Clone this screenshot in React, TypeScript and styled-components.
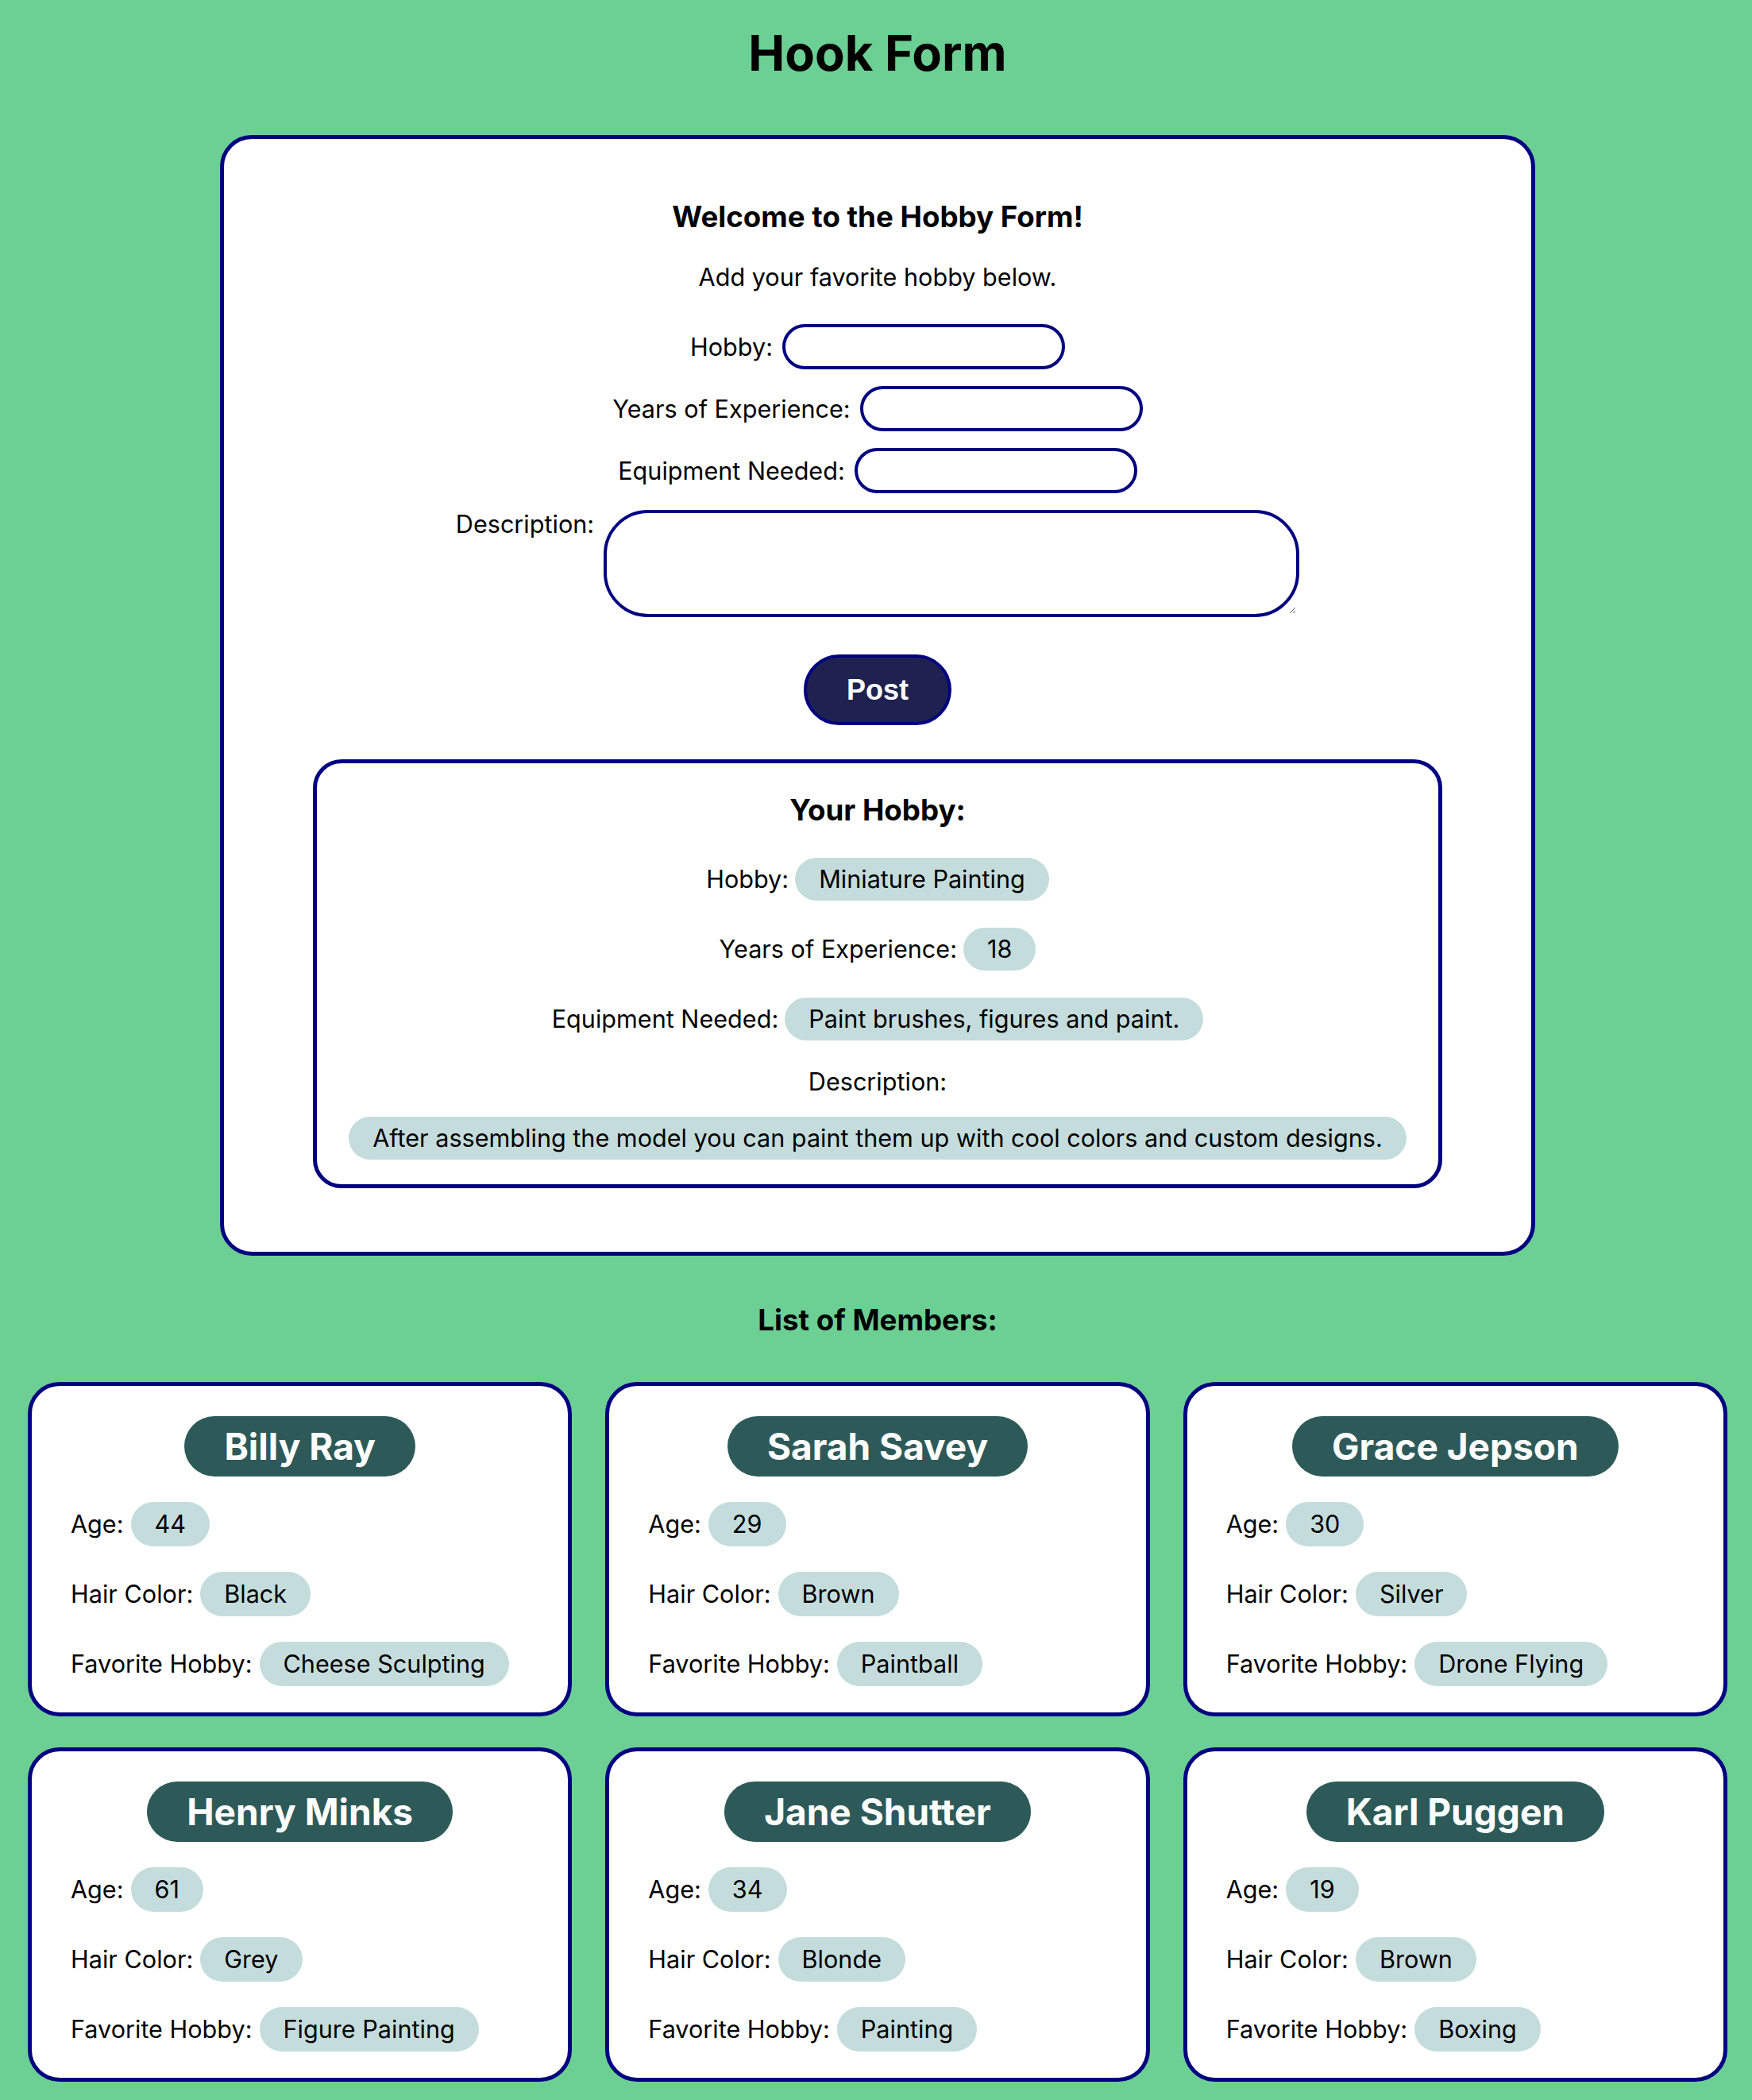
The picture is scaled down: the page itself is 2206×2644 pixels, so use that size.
import React from "react";
import styled, { createGlobalStyle } from "styled-components";

const GlobalStyle = createGlobalStyle`
  html, body {
    margin: 0;
    padding: 0;
    background: #6ccf94;
  }
  body {
    font-family: Inter, "Noto Sans", sans-serif;
    color: #000;
  }
  * { box-sizing: border-box; }
`;

const Page = styled.div`
  display: flex;
  flex-direction: column;
  align-items: center;
  padding: 30px 31px 25px 35px;
`;

const Title = styled.h1`
  margin: 0;
  font-size: 61.5px;
  line-height: 74px;
  font-weight: 700;
`;

const MainCard = styled.section`
  margin-top: 66px;
  width: 1656px;
  background: #fff;
  border: 5px solid #000080;
  border-radius: 40px;
  padding: 76px 112px 80px;
  display: flex;
  flex-direction: column;
  align-items: center;
`;

const Heading = styled.h3<{ $top?: number }>`
  margin: ${(p) => p.$top ?? 0}px 0 0;
  font-size: 36.7px;
  line-height: 44px;
  font-weight: 700;
  text-align: center;
`;

const Text = styled.p<{ $top?: number }>`
  margin: ${(p) => p.$top ?? 0}px 0 0;
  font-size: 30.6px;
  line-height: 36px;
  text-align: center;
`;

const Form = styled.form`
  margin-top: 41px;
  display: flex;
  flex-direction: column;
  align-items: center;
  gap: 21px;
`;

const FieldRow = styled.label<{ $top?: boolean }>`
  display: flex;
  align-items: ${(p) => (p.$top ? "flex-start" : "center")};
  justify-content: center;
  gap: 12px;
  font-size: 30.6px;
  line-height: 36px;
`;

const TextInput = styled.input`
  width: 356px;
  height: 57px;
  border: 4px solid #000080;
  border-radius: 29px;
  background: #fff;
  font-family: inherit;
  font-size: 28px;
  padding: 0 20px;
  outline: none;
`;

const TextArea = styled.textarea`
  width: 876px;
  height: 135px;
  border: 4px solid #000080;
  border-radius: 56px;
  background: #fff;
  font-family: inherit;
  font-size: 28px;
  padding: 16px 30px;
  outline: none;
  display: block;
`;

const PostButton = styled.button`
  margin-top: 47px;
  width: 186px;
  height: 89px;
  border: 4px solid #000080;
  border-radius: 45px;
  background: #1f2250;
  color: #fff;
  font-family: "Liberation Sans", Arial, sans-serif;
  font-weight: 700;
  font-size: 36px;
  cursor: pointer;
`;

const ResultCard = styled.div`
  margin-top: 43px;
  width: 100%;
  border: 5px solid #000080;
  border-radius: 36px;
  padding: 37px 20px 31px;
  display: flex;
  flex-direction: column;
  align-items: center;
`;

const ResultRows = styled.div`
  margin-top: 38px;
  display: flex;
  flex-direction: column;
  align-items: center;
  gap: 34px;
`;

const InfoRow = styled.div`
  display: flex;
  align-items: center;
  gap: 8px;
  font-size: 30.6px;
  line-height: 36px;
`;

const Pill = styled.span<{ $pad?: number; $vpad?: number }>`
  display: inline-block;
  background: #c5dcdc;
  border-radius: 30px;
  padding: ${(p) => p.$vpad ?? 9}px ${(p) => p.$pad ?? 30}px;
  font-size: 30.6px;
  line-height: 36px;
  white-space: nowrap;
`;

const DescPill = styled(Pill)`
  margin-top: 26px;
`;

const MembersHeading = styled(Heading)`
  margin-top: 59px;
`;

const MemberGrid = styled.div`
  margin-top: 56px;
  width: 100%;
  display: grid;
  grid-template-columns: repeat(3, 1fr);
  column-gap: 42px;
  row-gap: 39px;
`;

const MemberCard = styled.article`
  background: #fff;
  border: 5px solid #000080;
  border-radius: 40px;
  padding: 38px 30px 33px 49px;
  display: flex;
  flex-direction: column;
  align-items: flex-start;
`;

const NamePill = styled.h2`
  align-self: center;
  margin: 0 0 0 -19px;
  background: #2d5a59;
  color: #fff;
  font-size: 46px;
  line-height: 56px;
  font-weight: 700;
  padding: 10px 50px;
  border-radius: 38px;
  white-space: nowrap;
`;

const MemberRows = styled.div`
  margin-top: 32px;
  display: flex;
  flex-direction: column;
  align-items: flex-start;
  gap: 32px;
`;

const MemberRow = styled.div`
  display: flex;
  align-items: center;
  gap: 9px;
  font-size: 30.6px;
  line-height: 36px;
`;

const members = [
  { name: "Billy Ray", age: 44, hair: "Black", hobby: "Cheese Sculpting" },
  { name: "Sarah Savey", age: 29, hair: "Brown", hobby: "Paintball" },
  { name: "Grace Jepson", age: 30, hair: "Silver", hobby: "Drone Flying" },
  { name: "Henry Minks", age: 61, hair: "Grey", hobby: "Figure Painting" },
  { name: "Jane Shutter", age: 34, hair: "Blonde", hobby: "Painting" },
  { name: "Karl Puggen", age: 19, hair: "Brown", hobby: "Boxing" },
];

export default function App() {
  return (
    <>
      <GlobalStyle />
      <Page>
        <Title>Hook Form</Title>
        <MainCard>
          <Heading>Welcome to the Hobby Form!</Heading>
          <Text $top={36}>Add your favorite hobby below.</Text>
          <Form onSubmit={(e) => e.preventDefault()}>
            <FieldRow>
              Hobby:
              <TextInput type="text" />
            </FieldRow>
            <FieldRow>
              Years of Experience:
              <TextInput type="text" />
            </FieldRow>
            <FieldRow>
              Equipment Needed:
              <TextInput type="text" />
            </FieldRow>
            <FieldRow $top>
              Description:
              <TextArea />
            </FieldRow>
          </Form>
          <PostButton type="button">Post</PostButton>
          <ResultCard>
            <Heading>Your Hobby:</Heading>
            <ResultRows>
              <InfoRow>
                Hobby: <Pill>Miniature Painting</Pill>
              </InfoRow>
              <InfoRow>
                Years of Experience: <Pill>18</Pill>
              </InfoRow>
              <InfoRow>
                Equipment Needed: <Pill>Paint brushes, figures and paint.</Pill>
              </InfoRow>
              <InfoRow>Description:</InfoRow>
            </ResultRows>
            <DescPill>
              After assembling the model you can paint them up with cool colors and custom designs.
            </DescPill>
          </ResultCard>
        </MainCard>
        <MembersHeading>List of Members:</MembersHeading>
        <MemberGrid>
          {members.map((m) => (
            <MemberCard key={m.name}>
              <NamePill>{m.name}</NamePill>
              <MemberRows>
                <MemberRow>
                  Age: <Pill $pad={30} $vpad={10}>{m.age}</Pill>
                </MemberRow>
                <MemberRow>
                  Hair Color: <Pill $pad={30} $vpad={10}>{m.hair}</Pill>
                </MemberRow>
                <MemberRow>
                  Favorite Hobby: <Pill $pad={30} $vpad={10}>{m.hobby}</Pill>
                </MemberRow>
              </MemberRows>
            </MemberCard>
          ))}
        </MemberGrid>
      </Page>
    </>
  );
}
